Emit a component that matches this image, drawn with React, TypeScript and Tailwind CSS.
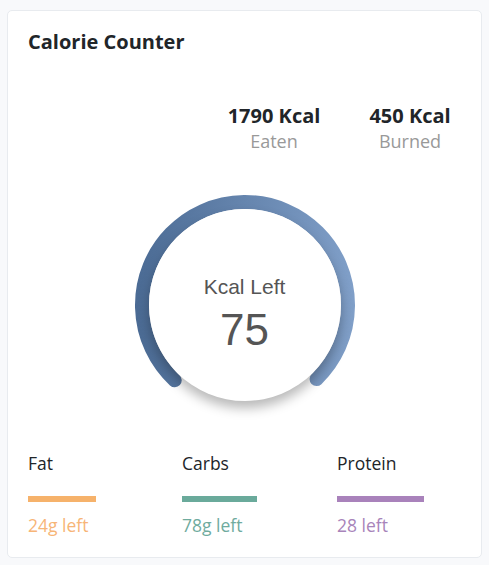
const macros = [
    { name: "Fat", left: "24g left", bar: "bg-[#f6b26b]", text: "text-[#f7b577]", width: "w-[68px]" },
    { name: "Carbs", left: "78g left", bar: "bg-[#6aaa9b]", text: "text-[#6fab9e]", width: "w-[75px]" },
    { name: "Protein", left: "28 left", bar: "bg-[#a982bb]", text: "text-[#a884ba]", width: "w-[87px]" },
]

const point = (deg: number, r: number) => {
    const a = (deg * Math.PI) / 180
    return `${(120 + r * Math.cos(a)).toFixed(2)} ${(120 + r * Math.sin(a)).toFixed(2)}`
}

const Gauge = () => {
    const r = 103
    // arc from 133deg clockwise to 46deg (gap at the bottom)
    const d = `M ${point(133, r)} A ${r} ${r} 0 1 1 ${point(46, r)}`

    return (
        <div className="relative mx-auto mt-[31px] w-[240px] h-[240px]">
            <svg width="240" height="240" viewBox="0 0 240 240">
                <defs>
                    <linearGradient id="ring" x1="0" y1="0" x2="240" y2="0" gradientUnits="userSpaceOnUse">
                        <stop offset="0.05" stopColor="#4b6b94" />
                        <stop offset="0.95" stopColor="#809fc8" />
                    </linearGradient>
                </defs>
                <path d={d} fill="none" stroke="url(#ring)" strokeWidth="14" strokeLinecap="round" />
            </svg>
            {/* inner disc */}
            <div className="absolute left-[24px] top-[24px] w-[192px] h-[192px] rounded-full bg-white shadow-[0_7px_12px_rgba(0,0,0,0.28)] flex flex-col items-center pt-[66px] text-[#555555]" style={{ fontFamily: '"Liberation Sans", Arial, sans-serif' }}>
                <div className="text-[21px] leading-[24px]">Kcal Left</div>
                <div className="mt-[7px] text-[44px] leading-[48px]">75</div>
            </div>
        </div>
    )
}

export default function App() {
    return (
        <div className="min-h-screen bg-[#f8f9fb] pt-[10px] px-[7px]" style={{ fontFamily: '"Open Sans", sans-serif' }}>
            <div className="w-[475px] h-[548px] bg-white border border-[#e8ebef] rounded-[5px] px-[20px] pt-[17px]">
                <h2 className="text-[20px] leading-[28px] font-bold text-[#212529]">Calorie Counter</h2>

                {/* eaten / burned */}
                <div className="mt-[48px] flex justify-end pr-[1px] gap-[36px]">
                    <div className="w-[100px] text-center">
                        <div className="text-[20px] leading-[24px] font-bold text-[#212529]">1790 Kcal</div>
                        <div className="text-[18px] leading-[26px] text-[#999999]">Eaten</div>
                    </div>
                    <div className="w-[100px] text-center">
                        <div className="text-[20px] leading-[24px] font-bold text-[#212529]">450 Kcal</div>
                        <div className="text-[18px] leading-[26px] text-[#999999]">Burned</div>
                    </div>
                </div>

                <Gauge />

                {/* macros */}
                <div className="mt-[26px] grid grid-cols-[154px_155px_1fr]">
                    {macros.map((m) => (
                        <div key={m.name}>
                            <div className="text-[17.5px] leading-[25px] text-[#212529]">{m.name}</div>
                            <div className={`mt-[20px] h-[6px] ${m.width} ${m.bar}`} />
                            <div className={`mt-[11px] text-[17.5px] leading-[25px] ${m.text}`}>{m.left}</div>
                        </div>
                    ))}
                </div>
            </div>
        </div>
    )
}
